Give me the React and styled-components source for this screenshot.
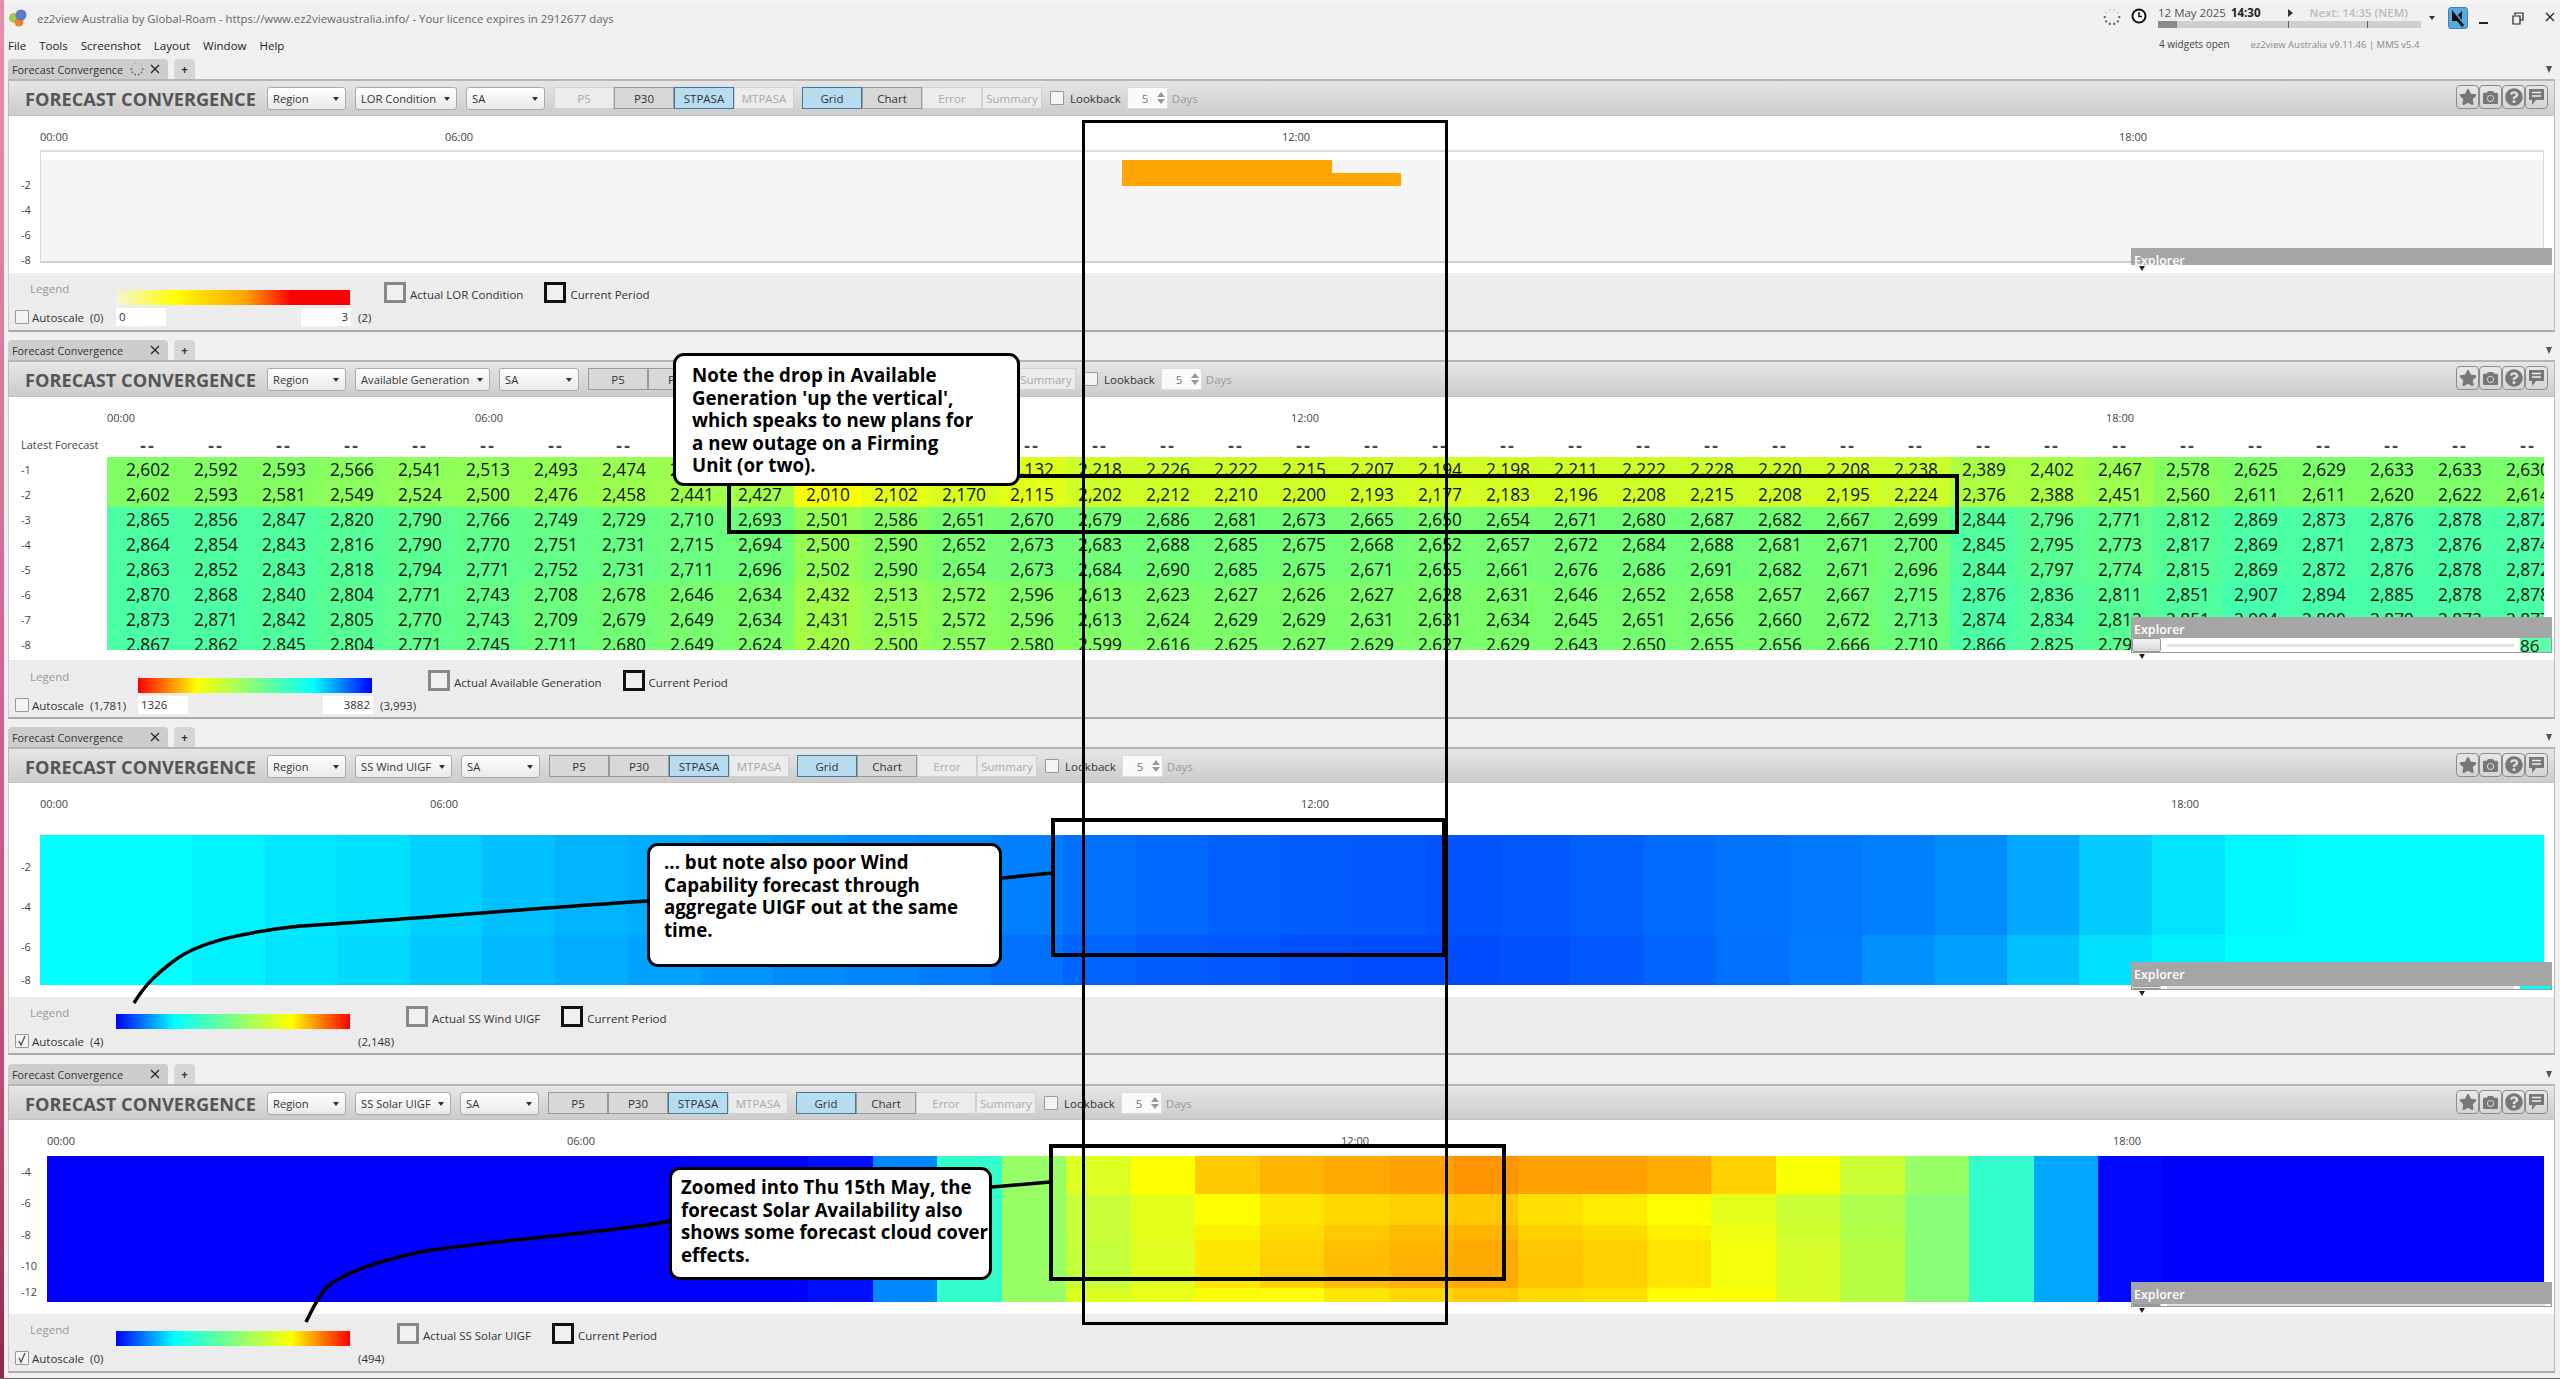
import React from "react";
import styled, { createGlobalStyle } from "styled-components";
import { FaStar, FaCamera, FaQuestionCircle } from "react-icons/fa";

const GlobalStyle = createGlobalStyle`
  html, body {
    margin: 0;
    padding: 0;
    height: 1379px;
    overflow: hidden;
    background: #f0f0f0;
  }
  * { box-sizing: border-box; }
`;

const UI_FONT = `"Open Sans", "Liberation Sans", sans-serif`;

const Page = styled.div`
  position: relative;
  width: 2560px;
  height: 1379px;
  padding: 4px 5px 0 8px;
  overflow: hidden;
  background: linear-gradient(#f4f4f4, #f4f4f4) 0 0 / 100% 4px no-repeat, #f0f0f0;
  font-family: ${UI_FONT};
  font-size: 11.5px;
  color: #333;
  &::before {
    content: "";
    position: absolute;
    left: 0;
    top: 0;
    bottom: 0;
    width: 4px;
    background: linear-gradient(#e58fb0, #d0709a 40%, #b84a78 80%, #8a2a50);
  }
  &::after {
    content: "";
    position: absolute;
    left: 0;
    right: 0;
    bottom: 0;
    height: 1px;
    background: #666;
  }
`;

const Header = styled.header`
  display: flex;
  justify-content: space-between;
  height: 55px;
`;
const HeaderLeft = styled.div`
  display: flex;
  flex-direction: column;
`;
const TitleRow = styled.div`
  display: flex;
  align-items: center;
  gap: 9px;
  height: 28px;
  color: #666;
  font-size: 11.4px;
`;
const MenuRow = styled.nav`
  display: flex;
  gap: 13px;
  height: 27px;
  align-items: center;
  color: #222;
  font-size: 11.5px;
`;
const StatusBlock = styled.div`
  display: flex;
  flex-direction: column;
  width: 455px;
`;
const StatusTop = styled.div`
  display: flex;
  height: 28px;
  align-items: flex-start;
`;
const StatusIcon = styled.span`
  display: flex;
  margin: 4px ${(p) => p.$gap}px 0 ${(p) => p.$left || 0}px;
`;
const Clock = styled.div`
  width: 263px;
  display: flex;
  flex-direction: column;
  margin-right: 5px;
`;
const ClockText = styled.div`
  display: flex;
  height: 17px;
  align-items: center;
  color: #555;
  white-space: nowrap;
`;
const ClockTime = styled.b`
  margin-left: 5px;
  color: #222;
  font-weight: 700;
`;
const PlayMark = styled.span`
  width: 0;
  height: 0;
  margin: 0 17px 0 27px;
  border-left: 5px solid #333;
  border-top: 4px solid transparent;
  border-bottom: 4px solid transparent;
`;
const NextText = styled.span`
  color: #bbb;
  font-weight: 600;
`;
const ClockTrack = styled.div`
  display: flex;
  height: 7px;
  background: #cfcfcf;
`;
const ClockFill = styled.div`
  width: ${(p) => p.$w}px;
  background: ${(p) => p.$dark ? "#8a8a8a" : "transparent"};
  border-right: ${(p) => p.$dark ? "none" : "1px solid #666"};
`;
const SmallCaret = styled.span`
  width: 0;
  height: 0;
  margin: ${(p) => p.$top || 12}px 0 0 ${(p) => p.$left || 0}px;
  border-top: 4px solid #333;
  border-left: 3px solid transparent;
  border-right: 3px solid transparent;
`;
const LogoBox = styled.div`
  width: 20px;
  height: 22px;
  margin: 3px 11px 0 13px;
  border-radius: 3px;
  background: #5aa9dc;
  border: 1px solid #3c84b4;
  display: flex;
`;
const WinButton = styled.span`
  display: flex;
  margin: 8px ${(p) => p.$gap}px 0 0;
`;
const StatusInfo = styled.div`
  display: flex;
  gap: 21px;
  height: 27px;
  align-items: center;
  margin-left: 59px;
  padding-bottom: 3px;
  font-size: 10px;
  color: #444;
`;
const VersionText = styled.span`
  color: #888;
  font-size: 9.5px;
`;

const PanelBlock = styled.section`
  margin-bottom: ${(p) => p.$gap}px;
`;
const TabRow = styled.div`
  display: flex;
  height: 20px;
`;
const Tab = styled.div`
  display: flex;
  align-items: center;
  width: 160px;
  padding: 0 4px;
  background: #cdcdcd;
  border-radius: 4px 4px 0 0;
  color: #333;
  font-size: 10.8px;
  white-space: nowrap;
`;
const TabName = styled.span`
  flex: 1;
`;
const TabGap = styled.span`
  flex: none;
  width: ${(p) => p.$w}px;
`;
const AddTab = styled.div`
  display: flex;
  align-items: center;
  justify-content: center;
  width: 21px;
  margin-left: 6px;
  background: #d6d6d6;
  border-radius: 4px 4px 0 0;
  font-weight: 700;
`;
const TabCaret = styled.div`
  margin: 7px 3px 0 auto;
  width: 0;
  height: 0;
  border-top: 7px solid #555;
  border-left: 3px solid transparent;
  border-right: 3px solid transparent;
`;

const Toolbar = styled.div`
  display: flex;
  align-items: flex-start;
  height: ${(p) => p.$h}px;
  padding-top: 6px;
  background: linear-gradient(#e6e6e6, #cccccc);
  border-top: 2px solid #b5b5b5;
  border-right: 1px solid #bbb;
  border-left: 1px solid #bbb;
  border-bottom: 1px solid #c4c4c4;
`;
const WidgetTitle = styled.h2`
  margin: 0;
  width: 258px;
  padding-left: 16px;
  line-height: 24px;
  font-size: 18.2px;
  font-weight: 700;
  color: #555;
  white-space: nowrap;
`;
const Select = styled.div`
  display: flex;
  align-items: center;
  justify-content: space-between;
  width: ${(p) => p.$w}px;
  height: 23px;
  margin-right: ${(p) => p.$gap}px;
  padding: 0 6px 0 5px;
  background: linear-gradient(#ffffff, #e9e9e9);
  border: 1px solid #aaa;
  border-radius: 3px;
  color: #333;
  font-size: 11.2px;
  white-space: nowrap;
`;
const ButtonGroup = styled.div`
  display: flex;
  margin-right: 8px;
`;
const ToggleButton = styled.div`
  display: flex;
  align-items: center;
  justify-content: center;
  width: 60px;
  height: 22px;
  border: 1px solid ${(p) => p.$kind === "on" ? "#47789c" : p.$kind === "off" ? "#d0d0d0" : "#999"};
  background: ${(p) => p.$kind === "on" ? "#b7dcf0" : p.$kind === "off" ? "#ececec" : "#d8d8d8"};
  color: ${(p) => p.$kind === "off" ? "#aaa" : "#333"};
`;
const CheckBox = styled.span`
  display: flex;
  align-items: center;
  justify-content: center;
  flex: none;
  width: 14px;
  height: 14px;
  background: #f4f4f4;
  border: 1px solid #999;
  border-radius: 1px;
`;
const LookbackRow = styled.div`
  display: flex;
  align-items: center;
  height: 22px;
  gap: 6px;
`;
const SpinBox = styled.div`
  display: flex;
  align-items: center;
  justify-content: space-between;
  width: 41px;
  height: 22px;
  padding: 0 2px 0 14px;
  background: #fafafa;
  border: 1px solid #ddd;
  color: #777;
`;
const SpinArrows = styled.span`
  display: flex;
  flex-direction: column;
  gap: 2px;
`;
const SpinArrow = styled.span`
  width: 0;
  height: 0;
  border-left: 4px solid transparent;
  border-right: 4px solid transparent;
  ${(p) => p.$up ? "border-bottom: 5px solid #999;" : "border-top: 5px solid #999;"}
`;
const DaysLabel = styled.span`
  color: #999;
  margin-left: -2px;
`;
const IconBar = styled.div`
  display: flex;
  margin-left: auto;
  margin-right: 6px;
  margin-top: -2px;
`;
const IconButton = styled.div`
  display: flex;
  align-items: center;
  justify-content: center;
  width: 23px;
  height: 24px;
  color: #777;
  background: linear-gradient(#e8e8e8, #d4d4d4);
  border: 1px solid #8c8c8c;
  border-radius: 4px;
`;

const ChartArea = styled.div`
  position: relative;
  height: ${(p) => p.$h}px;
  background: #fff;
  border-left: 1px solid #ccc;
  border-right: 1px solid #bbb;
  overflow: visible;
`;
const TimeAxis = styled.div`
  display: flex;
  height: ${(p) => p.$h}px;
  padding: 14px 0 0 ${(p) => p.$left}px;
  line-height: 14px;
  font-size: 11px;
  color: #444;
`;
const TimeLabel = styled.span`
  flex: none;
  width: ${(p) => p.$w}px;
`;
const PlotRow = styled.div`
  display: flex;
`;
const YAxis = styled.div`
  flex: none;
  width: ${(p) => p.$w}px;
  padding: ${(p) => p.$top}px 0 0 12px;
  font-size: 11px;
  color: #444;
`;
const YLabel = styled.div`
  display: flex;
  align-items: center;
  height: ${(p) => p.$h}px;
`;
const Plot = styled.div`
  width: ${(p) => p.$w}px;
  height: ${(p) => p.$h}px;
  overflow: hidden;
  background: ${(p) => p.$bg || "#fff"};
  border-top: ${(p) => p.$line ? "2px solid #dcdcdc" : "none"};
  border-bottom: ${(p) => p.$line ? "2px solid #d0d0d0" : "none"};
  border-left: ${(p) => p.$line ? "1px solid #dcdcdc" : "none"};
  border-right: ${(p) => p.$line ? "1px solid #dcdcdc" : "none"};
`;

const LorTop = styled.div`
  height: 8px;
  background: #fff;
`;
const LorField = styled.div`
  display: flex;
  align-items: flex-start;
  height: 101px;
  padding-left: 1081px;
  background: #f5f5f5;
`;
const LorBar = styled.div`
  flex: none;
  width: ${(p) => p.$w}px;
  height: 26px;
  background: ${(p) => p.$half ? "linear-gradient(transparent 50%, #ffa500 50%)" : "#ffa500"};
`;

const NumberGrid = styled.div`
  display: grid;
  grid-template-columns: 75px repeat(35, 68px);
  grid-auto-rows: 25px;
  font-size: 17.3px;
  color: #111;
`;
const DashCell = styled.div`
  display: flex;
  align-items: center;
  justify-content: center;
  padding-left: ${(p) => p.$first ? 7 : 0}px;
  padding-top: 3px;
  font-family: "Liberation Sans", sans-serif;
  font-size: 18px;
  font-weight: 700;
  letter-spacing: 2px;
  color: #444;
`;
const NumberCell = styled.div`
  display: flex;
  align-items: center;
  justify-content: center;
  padding-left: ${(p) => p.$first ? 7 : 0}px;
  white-space: nowrap;
  overflow: visible;
`;

const StripSpacer = styled.div`
  height: ${(p) => p.$h}px;
`;
const BandGrid = styled.div`
  display: grid;
  grid-template-columns: ${(p) => p.$cols};
  grid-template-rows: ${(p) => p.$rows};
  height: ${(p) => p.$h}px;
`;

const Explorer = styled.div`
  position: absolute;
  left: 2122px;
  top: ${(p) => p.$top}px;
  width: 421px;
  &::after {
    content: "";
    position: absolute;
    left: 8px;
    bottom: -6px;
    border-top: 5px solid #222;
    border-left: 3px solid transparent;
    border-right: 3px solid transparent;
  }
`;
const ExplorerHead = styled.div`
  height: ${(p) => p.$h}px;
  padding: 4px 0 0 3px;
  overflow: hidden;
  background: #a6a6a6;
  color: #fff;
  font-size: 12.5px;
  font-weight: 600;
  line-height: 18px;
`;
const ExplorerStrip = styled.div`
  display: flex;
  align-items: center;
  height: ${(p) => p.$h}px;
  overflow: hidden;
  background: #fff;
  border: 1px solid #999;
  border-top: none;
`;
const ExplorerThumb = styled.div`
  flex: none;
  width: 29px;
  height: 100%;
  background: linear-gradient(#f2f2f2, #d8d8d8);
  border: 1px solid #999;
  border-radius: 2px;
`;
const ExplorerTrack = styled.div`
  flex: 1;
  height: 3px;
  margin: 0 6px;
  background: #e2e2e2;
`;
const ExplorerEnd = styled.div`
  flex: none;
  width: 31px;
  height: 100%;
  overflow: hidden;
  background: ${(p) => p.$bg};
  font-size: 17px;
  line-height: 15px;
  color: #222;
`;

const LegendBar = styled.div`
  height: ${(p) => p.$h}px;
  padding-top: ${(p) => p.$top}px;
  background: #ececec;
  border-left: 1px solid #ccc;
  border-right: 1px solid #bbb;
  border-bottom: 2px solid #aaa;
`;
const LegendTop = styled.div`
  display: flex;
  align-items: flex-start;
  height: 26px;
`;
const LegendCaption = styled.span`
  flex: none;
  width: ${(p) => p.$w}px;
  padding-left: 21px;
  line-height: 13px;
  color: #999;
`;
const ColourBar = styled.div`
  flex: none;
  width: 234px;
  height: 15px;
  margin-top: 8px;
  background: ${(p) => p.$stops};
`;
const Swatch = styled.span`
  flex: none;
  width: 22px;
  height: 21px;
  margin: 0 4px 0 ${(p) => p.$gap}px;
  background: #f0f0f0;
  border: 3px solid ${(p) => p.$dark ? "#111" : "#888"};
`;
const SwatchText = styled.span`
  line-height: 21px;
  padding-top: 2px;
  white-space: nowrap;
`;
const LegendBottom = styled.div`
  display: flex;
  align-items: center;
  height: 18px;
`;
const AutoGroup = styled.div`
  display: flex;
  align-items: center;
  flex: none;
  width: ${(p) => p.$w}px;
  padding-left: 6px;
`;
const AutoText = styled.span`
  width: 58px;
  margin-left: 3px;
`;
const RangeBox = styled.div`
  display: flex;
  justify-content: space-between;
  flex: none;
  width: 235px;
  margin-right: 7px;
`;
const RangeInput = styled.div`
  width: 50px;
  height: 18px;
  padding: 0 3px;
  background: #fff;
  line-height: 18px;
  text-align: ${(p) => p.$right ? "right" : "left"};
`;

const Note = styled.div`
  position: absolute;
  left: ${(p) => p.$x}px;
  top: ${(p) => p.$y}px;
  width: ${(p) => p.$w}px;
  height: ${(p) => p.$h}px;
  padding: ${(p) => p.$pad};
  background: #fff;
  border: 3px solid #000;
  border-radius: 11px;
  font-size: 18.7px;
  font-weight: 700;
  line-height: 22.6px;
  color: #000;
`;
const NoteLine = styled.span`
  display: block;
  white-space: nowrap;
`;
const FrameBox = styled.div`
  position: absolute;
  left: ${(p) => p.$x}px;
  top: ${(p) => p.$y}px;
  width: ${(p) => p.$w}px;
  height: ${(p) => p.$h}px;
  border: ${(p) => p.$b}px solid #000;
  pointer-events: none;
`;
const Connectors = styled.svg`
  position: absolute;
  left: 0;
  top: 0;
  pointer-events: none;
`;

// colours are read off the widget's own scale: red, yellow, green, cyan, blue
const mix = (a, b, f) => a.map((v, i) => Math.round(v + (b[i] - v) * f));
const JET = [[255, 0, 0], [255, 255, 0], [128, 255, 100], [0, 255, 255], [0, 0, 255]];
const heat = (value) => {
  const t = Math.max(0, Math.min(0.999, (value - 1326) / (3882 - 1326))) * 4;
  const i = Math.floor(t);
  return `rgb(${mix(JET[i], JET[i + 1], t - i).join(",")})`;
};

const ROWS = [
  [2602,2592,2593,2566,2541,2513,2493,2474,2456,2440,2025,2115,2185,2132,2218,2226,2222,2215,2207,2194,2198,2211,2222,2228,2220,2208,2238,2389,2402,2467,2578,2625,2629,2633,2633,2630],
  [2602,2593,2581,2549,2524,2500,2476,2458,2441,2427,2010,2102,2170,2115,2202,2212,2210,2200,2193,2177,2183,2196,2208,2215,2208,2195,2224,2376,2388,2451,2560,2611,2611,2620,2622,2614],
  [2865,2856,2847,2820,2790,2766,2749,2729,2710,2693,2501,2586,2651,2670,2679,2686,2681,2673,2665,2650,2654,2671,2680,2687,2682,2667,2699,2844,2796,2771,2812,2869,2873,2876,2878,2872],
  [2864,2854,2843,2816,2790,2770,2751,2731,2715,2694,2500,2590,2652,2673,2683,2688,2685,2675,2668,2652,2657,2672,2684,2688,2681,2671,2700,2845,2795,2773,2817,2869,2871,2873,2876,2874],
  [2863,2852,2843,2818,2794,2771,2752,2731,2711,2696,2502,2590,2654,2673,2684,2690,2685,2675,2671,2655,2661,2676,2686,2691,2682,2671,2696,2844,2797,2774,2815,2869,2872,2876,2878,2872],
  [2870,2868,2840,2804,2771,2743,2708,2678,2646,2634,2432,2513,2572,2596,2613,2623,2627,2626,2627,2628,2631,2646,2652,2658,2657,2667,2715,2876,2836,2811,2851,2907,2894,2885,2878,2878],
  [2873,2871,2842,2805,2770,2743,2709,2679,2649,2634,2431,2515,2572,2596,2613,2624,2629,2629,2631,2631,2634,2645,2651,2656,2660,2672,2713,2874,2834,2812,2851,2904,2890,2879,2873,2877],
  [2867,2862,2845,2804,2771,2745,2711,2680,2649,2624,2420,2500,2557,2580,2599,2616,2625,2627,2629,2627,2629,2643,2650,2655,2656,2666,2710,2866,2825,2791,2840,2890,2880,2870,2860,2865],
];

const hexes = (s) => s.split(" ").map((c) => `#${c}`);
const WIND_TOP = hexes("00ffff 00ffff 00f4ff 00e8ff 00e0ff 00d0ff 00c0ff 00b4ff 00acff 00a0ff 0098ff 0090ff 0088ff 0080ff 0070ff 0068ff 0060ff 005cff 0058ff 0054ff 0056ff 0060ff 006cff 0074ff 0078ff 0080ff 008cff 00a8ff 00ccff 00e4ff 00f8ff 00ffff 00ffff 00ffff 00ffff");
const WIND_LOW = hexes("00ffff 00ffff 00f2ff 00e4ff 00daff 00caff 00b8ff 00acff 00a2ff 0096ff 008cff 0084ff 007aff 0072ff 0064ff 005cff 0056ff 0050ff 004cff 004cff 0050ff 0058ff 0064ff 0070ff 007aff 0090ff 00a0ff 00c0ff 00e0ff 00f0ff 00ffff 00ffff 00ffff 00ffff 00ffff");

const blue = hexes("0000ff 0000ff 0000ff 0000ff 0000ff 0000ff");
const same = (c) => hexes(`${c} ${c} ${c} ${c} ${c} ${c}`);
const SOLAR = [
  ...Array(12).fill(blue),
  same("0010ff"),
  same("0088ff"),
  same("33ffcc"),
  same("99ff66"),
  hexes("ddff22 c8ff38 c8ff38 c4ff3c c4ff3c dcff22"),
  hexes("ffff00 e4ff1a e4ff1a e0ff1e e0ff1e e8ff18"),
  hexes("ffc800 ffff00 fff000 ffe800 ffe800 f8ff00"),
  hexes("ffb400 ffe400 ffdc00 ffd400 ffd000 ffff00"),
  hexes("ffa800 ffd800 ffc800 ffc000 ffbc00 ffe800"),
  hexes("ffa000 ffd000 ffbc00 ffb400 ffb000 ffd800"),
  hexes("ff9400 ffc800 ffb400 ffaa00 ffaa00 ffc800"),
  hexes("ffa000 ffe000 ffd000 ffc800 ffc400 ffdc00"),
  hexes("ffa000 ffec00 ffdc00 ffd000 ffd000 ffe000"),
  hexes("ffac00 ffff00 fff000 ffe400 ffe400 ffff00"),
  hexes("ffd000 e4ff1a f0ff10 f4ff0c f4ff0c f8ff00"),
  hexes("f8ff00 ccff33 d0ff2e d4ff2a d8ff28 d8ff28"),
  hexes("ccff33 b0ff4f b4ff4a b8ff44 b8ff44 b8ff44"),
  hexes("99ff66 88ff77 88ff77 88ff77 88ff77 88ff77"),
  same("33ffcc"),
  same("00a8ff"),
  same("0008ff"),
  ...Array(6).fill(blue),
];

const SCALE_JET = "linear-gradient(90deg, #0000ff, #00ffff 25%, #80ff80 50%, #ffff00 75%, #ff0000)";
const SCALE_REV = "linear-gradient(90deg, #ff0000, #ffff00 25%, #80ff80 50%, #00ffff 75%, #0000ff)";
const SCALE_LOR = "linear-gradient(90deg, #f4f4d8, #ffff00 25%, #ffa500 55%, #ff0000 75%, #ff0000)";

const Spinner = ({ size = 16, color = "#555" }) => (
  <svg width={size} height={size} viewBox="0 0 16 16">
    {[0, 1, 2, 3, 4, 5, 6, 7, 8, 9].map((i) => {
      const a = (i / 10) * Math.PI * 2;
      return (
        <circle
          key={i}
          cx={8 + 6.5 * Math.cos(a)}
          cy={8 + 6.5 * Math.sin(a)}
          r={i < 6 ? 1 : 0.6}
          fill={color}
          opacity={i < 6 ? 1 : 0.5}
        />
      );
    })}
  </svg>
);

const AppIcon = () => (
  <svg width="20" height="20" viewBox="0 0 20 20">
    <circle cx="6" cy="10" r="5" fill="#9ccc50" />
    <circle cx="11" cy="14" r="4.5" fill="#f08030" />
    <circle cx="13" cy="7" r="5.5" fill="#5a7cc8" />
  </svg>
);

const ClockIcon = () => (
  <svg width="16" height="16" viewBox="0 0 16 16">
    <circle cx="8" cy="8" r="6.5" fill="#fff" stroke="#111" strokeWidth="2" />
    <path d="M8 4v4.5h3" fill="none" stroke="#111" strokeWidth="1.6" />
  </svg>
);

const LogoGlyph = () => (
  <svg width="18" height="20" viewBox="0 0 18 20">
    <path d="M3 2 L15 17 L13 19 L8 13 L3 13 Z" fill="#111" />
    <path d="M9 7 L13 3 L13 12 Z" fill="#111" />
  </svg>
);

const CheckMark = () => (
  <svg width="12" height="12" viewBox="0 0 12 12">
    <path d="M3 6 L5 10 L9 1" fill="none" stroke="#557" strokeWidth="1.4" />
  </svg>
);

const CloseIcon = () => (
  <svg width="10" height="10" viewBox="0 0 10 10">
    <path d="M1 1 L9 9 M9 1 L1 9" stroke="#222" strokeWidth="1.2" />
  </svg>
);

const BubbleIcon = () => (
  <svg width="17" height="18" viewBox="0 0 17 18">
    <path d="M1 1h15v11H8l-4 5v-5H1z" fill="#777" />
    <path d="M4 4.5h9M4 8h9" stroke="#eee" strokeWidth="1.5" />
  </svg>
);

const PanelTab = ({ busy }) => (
  <TabRow>
    <Tab>
      <TabName>Forecast Convergence</TabName>
      {busy && <Spinner size={14} />}
      <TabGap $w={busy ? 6 : 0} />
      <CloseIcon />
      <TabGap $w={4} />
    </Tab>
    <AddTab>+</AddTab>
    <TabCaret />
  </TabRow>
);

const PanelToolbar = ({ h, metric, metricWidth, regionWidth, firstOff }) => (
  <Toolbar $h={h}>
    <WidgetTitle>FORECAST CONVERGENCE</WidgetTitle>
    <Select $w={79} $gap={9}>Region<SmallCaret $top={1} /></Select>
    <Select $w={metricWidth} $gap={9}>{metric}<SmallCaret $top={1} /></Select>
    <Select $w={regionWidth} $gap={9}>SA<SmallCaret $top={1} /></Select>
    <ButtonGroup>
      <ToggleButton $kind={firstOff ? "off" : "plain"}>P5</ToggleButton>
      <ToggleButton>P30</ToggleButton>
      <ToggleButton $kind="on">STPASA</ToggleButton>
      <ToggleButton $kind="off">MTPASA</ToggleButton>
    </ButtonGroup>
    <ButtonGroup>
      <ToggleButton $kind="on">Grid</ToggleButton>
      <ToggleButton>Chart</ToggleButton>
      <ToggleButton $kind="off">Error</ToggleButton>
      <ToggleButton $kind="off">Summary</ToggleButton>
    </ButtonGroup>
    <LookbackRow>
      <CheckBox />
      <span>Lookback</span>
      <SpinBox>
        5
        <SpinArrows><SpinArrow $up /><SpinArrow /></SpinArrows>
      </SpinBox>
      <DaysLabel>Days</DaysLabel>
    </LookbackRow>
    <IconBar>
      <IconButton><FaStar size={18} /></IconButton>
      <IconButton><FaCamera size={15} /></IconButton>
      <IconButton><FaQuestionCircle size={18} /></IconButton>
      <IconButton><BubbleIcon /></IconButton>
    </IconBar>
  </Toolbar>
);

const Times = ({ h, left, widths }) => (
  <TimeAxis $h={h} $left={left}>
    {["00:00", "06:00", "12:00", "18:00"].map((t, i) => (
      <TimeLabel key={t} $w={widths[i] || 40}>{t}</TimeLabel>
    ))}
  </TimeAxis>
);

const YLabels = ({ w, top, labels }) => (
  <YAxis $w={w} $top={top}>
    {labels.map(([text, h]) => <YLabel key={text} $h={h}>{text}</YLabel>)}
  </YAxis>
);

const ExplorerWidget = ({ top, head, strip, endColour, endText }) => (
  <Explorer $top={top}>
    <ExplorerHead $h={head}>Explorer</ExplorerHead>
    {strip > 0 && (
      <ExplorerStrip $h={strip}>
        <ExplorerThumb />
        <ExplorerTrack />
        {endColour && <ExplorerEnd $bg={endColour}>{endText}</ExplorerEnd>}
      </ExplorerStrip>
    )}
  </Explorer>
);

const Legend = ({ h, top, left, stops, metric, swatchGap, auto, minText, minValue, maxValue, maxText }) => (
  <LegendBar $h={h} $top={top}>
    <LegendTop>
      <LegendCaption $w={left}>Legend</LegendCaption>
      <ColourBar $stops={stops} />
      <Swatch $gap={swatchGap} />
      <SwatchText>Actual {metric}</SwatchText>
      <Swatch $gap={21} $dark />
      <SwatchText>Current Period</SwatchText>
    </LegendTop>
    <LegendBottom>
      <AutoGroup $w={left}>
        <CheckBox>{auto && <CheckMark />}</CheckBox>
        <AutoText>Autoscale</AutoText>
        <span>{minText}</span>
      </AutoGroup>
      <RangeBox>
        {minValue && <RangeInput>{minValue}</RangeInput>}
        {maxValue && <RangeInput $right>{maxValue}</RangeInput>}
      </RangeBox>
      <span>{maxText}</span>
    </LegendBottom>
  </LegendBar>
);

const fmt = (n) => n.toLocaleString("en-AU");

const AvailabilityGrid = () => (
  <NumberGrid>
    {ROWS[0].map((_, i) => <DashCell key={i} $first={i === 0}>--</DashCell>)}
    {ROWS.flatMap((row, r) =>
      row.map((v, i) => (
        <NumberCell key={`${r}-${i}`} $first={i === 0} style={{ background: heat(v) }}>
          {fmt(v)}
        </NumberCell>
      ))
    )}
  </NumberGrid>
);

const WindBands = () => (
  <BandGrid $cols="79.4px repeat(34, 72.6px)" $rows="100px 50px" $h={150}>
    {WIND_TOP.map((c, i) => <div key={`t${i}`} style={{ background: c }} />)}
    {WIND_LOW.map((c, i) => <div key={`l${i}`} style={{ background: c }} />)}
  </BandGrid>
);

const SolarBands = () => (
  <BandGrid $cols="51.5px repeat(38, 64.5px)" $rows="38px 31px 15px 16px 32px 14px" $h={146}>
    {[0, 1, 2, 3, 4, 5].flatMap((band) =>
      SOLAR.map((col, i) => <div key={`${band}-${i}`} style={{ background: col[band] }} />)
    )}
  </BandGrid>
);

const NoteText = ({ lines }) => lines.map((l) => <NoteLine key={l}>{l}</NoteLine>);

export default function App() {
  return (
    <Page>
      <GlobalStyle />
      <Header>
        <HeaderLeft>
          <TitleRow>
            <AppIcon />
            ez2view Australia by Global-Roam - https://www.ez2viewaustralia.info/ - Your licence expires in 2912677 days
          </TitleRow>
          <MenuRow>
            <span>File</span>
            <span>Tools</span>
            <span>Screenshot</span>
            <span>Layout</span>
            <span>Window</span>
            <span>Help</span>
          </MenuRow>
        </HeaderLeft>
        <StatusBlock>
          <StatusTop>
            <StatusIcon $gap={10} $left={3}><Spinner size={18} /></StatusIcon>
            <StatusIcon $gap={11}><ClockIcon /></StatusIcon>
            <Clock>
              <ClockText>
                12 May 2025<ClockTime>14:30</ClockTime>
                <PlayMark />
                <NextText>Next: 14:35 (NEM)</NextText>
              </ClockText>
              <ClockTrack>
                <ClockFill $w={19} $dark />
                <ClockFill $w={112} />
                <ClockFill $w={79} />
              </ClockTrack>
            </Clock>
            <SmallCaret $left={3} />
            <LogoBox><LogoGlyph /></LogoBox>
            <WinButton $gap={23}>
              <svg width="10" height="14" viewBox="0 0 10 14"><path d="M0 11h9" stroke="#222" strokeWidth="2" /></svg>
            </WinButton>
            <WinButton $gap={21}>
              <svg width="12" height="14" viewBox="0 0 12 14">
                <path d="M3 3V1h8v7H8M1 4h7v8H1z" fill="none" stroke="#222" strokeWidth="1.2" />
              </svg>
            </WinButton>
            <WinButton $gap={0}><CloseIcon /></WinButton>
          </StatusTop>
          <StatusInfo>
            <span>4 widgets open</span>
            <VersionText>ez2view Australia v9.11.46 | MMS v5.4</VersionText>
          </StatusInfo>
        </StatusBlock>
      </Header>

      <PanelBlock $gap={8}>
        <PanelTab busy />
        <PanelToolbar h={37} metric="LOR Condition" metricWidth={102} regionWidth={79} firstOff />
        <ChartArea $h={157}>
          <Times h={34} left={31} widths={[405, 837, 837]} />
          <PlotRow>
            <YLabels w={31} top={22} labels={[["-2", 25], ["-4", 25], ["-6", 25], ["-8", 25]]} />
            <Plot $w={2504} $h={113} $line>
              <LorTop />
              <LorField>
                <LorBar $w={210} />
                <LorBar $w={69} $half />
              </LorField>
            </Plot>
          </PlotRow>
          <ExplorerWidget top={132} head={17} strip={0} />
        </ChartArea>
        <Legend h={59} top={9} left={107} stops={SCALE_LOR} metric="LOR Condition" swatchGap={34}
          minText="(0)" minValue="0" maxValue="3" maxText="(2)" />
      </PanelBlock>

      <PanelBlock $gap={8}>
        <PanelTab />
        <PanelToolbar h={37} metric="Available Generation" metricWidth={135} regionWidth={80} />
        <ChartArea $h={263}>
          <Times h={35} left={98} widths={[368, 816, 815]} />
          <PlotRow>
            <YLabels
              w={98}
              top={0}
              labels={[["Latest Forecast", 25], ["-1", 25], ["-2", 25], ["-3", 25], ["-4", 25], ["-5", 25], ["-6", 25], ["-7", 25], ["-8", 25]]}
            />
            <Plot $w={2437} $h={218}>
              <AvailabilityGrid />
            </Plot>
          </PlotRow>
          <ExplorerWidget top={220} head={21} strip={15} endColour="#5fffa8" endText="86" />
        </ChartArea>
        <Legend h={59} top={10} left={129} stops={SCALE_REV} metric="Available Generation" swatchGap={56}
          minText="(1,781)" minValue="1326" maxValue="3882" maxText="(3,993)" />
      </PanelBlock>

      <PanelBlock $gap={9}>
        <PanelTab />
        <PanelToolbar h={36} metric="SS Wind UIGF" metricWidth={97} regionWidth={79} />
        <ChartArea $h={214}>
          <Times h={35} left={31} widths={[390, 871, 870]} />
          <PlotRow>
            <YLabels w={31} top={28} labels={[["-2", 40], ["-4", 40], ["-6", 40], ["-8", 26]]} />
            <Plot $w={2504} $h={167}>
              <StripSpacer $h={17} />
              <WindBands />
            </Plot>
          </PlotRow>
          <ExplorerWidget top={179} head={24} strip={4} endColour="#00ffff" />
        </ChartArea>
        <Legend h={58} top={9} left={107} stops={SCALE_JET} metric="SS Wind UIGF" swatchGap={56}
          auto minText="(4)" maxText="(2,148)" />
      </PanelBlock>

      <PanelBlock $gap={0}>
        <PanelTab />
        <PanelToolbar h={36} metric="SS Solar UIGF" metricWidth={96} regionWidth={79} />
        <ChartArea $h={194}>
          <Times h={36} left={38} widths={[520, 774, 772]} />
          <PlotRow>
            <YLabels w={38} top={0} labels={[["-4", 31.3], ["-6", 31.3], ["-8", 31.3], ["-10", 31.3], ["-12", 21]]} />
            <Plot $w={2497} $h={146}>
              <SolarBands />
            </Plot>
          </PlotRow>
          <ExplorerWidget top={162} head={22} strip={3} />
        </ChartArea>
        <Legend h={59} top={9} left={107} stops={SCALE_JET} metric="SS Solar UIGF" swatchGap={47}
          auto minText="(0)" maxText="(494)" />
      </PanelBlock>

      <FrameBox $x={727} $y={474} $w={1232} $h={60} $b={4} />
      <FrameBox $x={1051} $y={818} $w={395} $h={139} $b={4} />
      <FrameBox $x={1049} $y={1144} $w={457} $h={137} $b={4} />
      <FrameBox $x={1082} $y={120} $w={366} $h={1205} $b={3} />

      <Connectors width="2560" height="1379" viewBox="0 0 2560 1379">
        <g fill="none" stroke="#000" strokeWidth="3.5">
          <path d="M1002 878 L1052 873" />
          <path d="M649 901 C520 909 400 920 300 926 C230 934 195 945 175 960 C155 975 145 985 134 1003" />
          <path d="M992 1187 L1050 1182" />
          <path d="M672 1221 C590 1235 490 1240 420 1252 C375 1262 345 1272 327 1287 C317 1298 312 1310 306 1322" />
        </g>
      </Connectors>

      <Note $x={673} $y={353} $w={347} $h={133} $pad="8px 8px 0 16px">
        <NoteText lines={["Note the drop in Available", "Generation 'up the vertical',", "which speaks to new plans for", "a new outage on a Firming", "Unit (or two)."]} />
      </Note>
      <Note $x={647} $y={843} $w={355} $h={124} $pad="5px 8px 0 14px">
        <NoteText lines={["... but note also poor Wind", "Capability forecast through", "aggregate UIGF out at the same", "time."]} />
      </Note>
      <Note $x={669} $y={1167} $w={323} $h={113} $pad="6px 0 0 9px">
        <NoteText lines={["Zoomed into Thu 15th May, the", "forecast Solar Availability also", "shows some forecast cloud cover", "effects."]} />
      </Note>
    </Page>
  );
}
